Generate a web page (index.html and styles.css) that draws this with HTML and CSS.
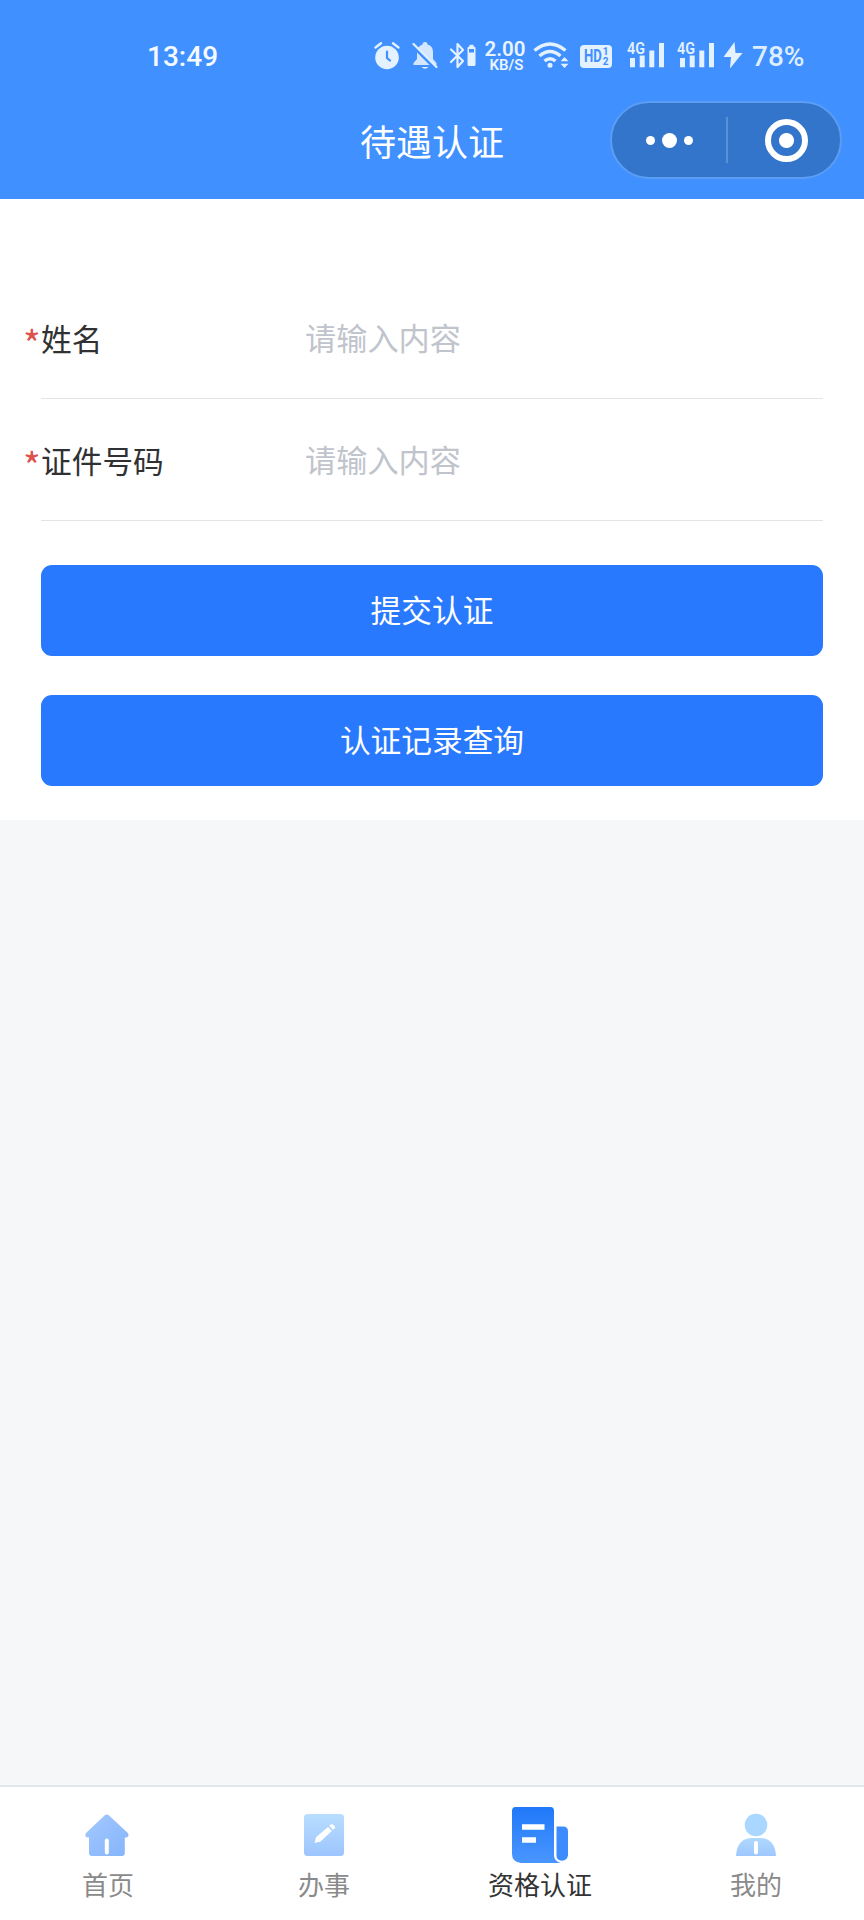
FILE: index.html
```
<!DOCTYPE html>
<html lang="zh-CN">
<head>
    <meta charset="UTF-8">
    <title>待遇认证</title>
    <link rel="stylesheet" href="styles.css">
</head>
<body>
<div class="page">
    <div class="header">
        <!--状态栏-->
        <div class="status">
            <span class="time">13:49</span>
            <div class="icons">
                <svg class="alarm" width="28" height="30" viewBox="0 0 28 30">
                    <circle cx="14" cy="16.5" r="11.8" fill="#e4f1ff"/>
                    <path d="M2.5 6.5L8 2.3M25.5 6.5L20 2.3" stroke="#e4f1ff" stroke-width="2.4" stroke-linecap="round"/>
                    <path d="M14 10.5v6.5l3 2.500" fill="none" stroke="#4090ff" stroke-width="2.2" stroke-linecap="round"/>
                </svg>
                <svg class="bell" width="26" height="30" viewBox="0 0 26 30">
                    <path d="M10.500 3.500a2.500 2.500 0 0 1 5 0a7.500 7.500 0 0 1 5.500 7.500v7l3.500 4v2h-23v-2l3.500-4v-7a8 8 0 0 1 5.500-7.500z" fill="#d4e7ff"/>
                    <path d="M9.500 26h7q-3.500 3.500-7 0z" fill="#e4f1ff"/>
                    <path d="M0 3.500L24.500 28" stroke="#4090ff" stroke-width="4"/>
                    <path d="M1.500 3L24.500 26" stroke="#e4f1ff" stroke-width="2.200" stroke-linecap="round"/>
                </svg>
                <svg class="bluetooth" width="28" height="30" viewBox="0 0 28 30">
                    <path d="M2 8.500L14 20L8.500 26V3L14 9L2 21" fill="none" stroke="#e4f1ff" stroke-width="2.200" stroke-linejoin="round" stroke-linecap="round"/>
                    <rect x="18.500" y="5.500" width="8" height="19.500" rx="1.500" fill="#e4f1ff"/>
                    <rect x="20.500" y="3.800" width="4" height="3" fill="#e4f1ff"/>
                    <rect x="20" y="8" width="5" height="3.500" fill="#4090ff"/>
                </svg>
                <div class="speed"><b>2.00</b><i>KB/S</i></div>
                <svg class="wifi" width="37" height="30" viewBox="0 0 37 30">
                    <g fill="none" stroke="#e4f1ff" stroke-width="3.500">
                        <path d="M1.500 9.500q15.500-13 31 0"/>
                        <path d="M6.500 15q10.500-9 21 0"/>
                        <path d="M11.500 20q5.500-4.500 11 0"/>
                    </g>
                    <circle cx="17" cy="24.300" r="2.500" fill="#e4f1ff"/>
                    <path d="M27.500 20.300l4-4.300l4 4.300zM27.500 22.700l4 4.300l4-4.300z" fill="#e4f1ff"/>
                </svg>
                <div class="hd">
                    <span>HD</span>
                    <div class="sim"><i>1</i><i>2</i></div>
                </div>
                <svg class="signal" width="38" height="30" viewBox="0 0 38 30">
                    <text x="0" y="12.500" class="net" textLength="18" lengthAdjust="spacingAndGlyphs">4G</text>
                    <path d="M5.500 17v9.300M15.200 14.500v11.800M24.800 9.500v16.800M34.500 2v24.300" stroke="#e4f1ff" stroke-width="5"/>
                </svg>
                <svg class="signal2" width="38" height="30" viewBox="0 0 38 30">
                    <text x="0" y="12.500" class="net" textLength="18" lengthAdjust="spacingAndGlyphs">4G</text>
                    <path d="M5.500 17v9.300M15.200 14.500v11.800M24.800 9.500v16.800M34.500 2v24.300" stroke="#e4f1ff" stroke-width="5"/>
                </svg>
                <svg class="bolt" width="20" height="30" viewBox="0 0 20 30">
                    <path d="M11.500 1L0.500 16h7.500L7 27.500L19.500 12h-7z" fill="#e4f1ff"/>
                </svg>
                <span class="power">78%</span>
            </div>
        </div>
        <!--标题栏-->
        <div class="nav">
            <h1 class="title">待遇认证</h1>
            <div class="capsule">
                <div class="more"><i></i><i class="big"></i><i></i></div>
                <div class="line"></div>
                <div class="close"><i></i></div>
            </div>
        </div>
    </div>

    <div class="form">
        <div class="item">
            <label class="label" for="name"><em>*</em>姓名</label>
            <input class="input" id="name" type="text" placeholder="请输入内容">
        </div>
        <div class="item">
            <label class="label" for="card"><em>*</em>证件号码</label>
            <input class="input" id="card" type="text" placeholder="请输入内容">
        </div>
        <button class="btn">提交认证</button>
        <button class="btn">认证记录查询</button>
    </div>

    <!--底部导航-->
    <div class="tabbar">
        <div class="tab">
            <svg width="60" height="60" viewBox="0 0 60 60">
                <defs><linearGradient id="g1" x1="0" y1="0" x2="1" y2="1"><stop offset="0" stop-color="#a3c9ff"/><stop offset="1" stop-color="#85b4fb"/></linearGradient></defs>
                <path d="M26.500 10.600q2.300-2 4.600 0L49.800 28q2 3.500-1.500 4.500h-1.500V48q0 3-3 3H14q-3 0-3-3V32.500H9.500q-3.500-1-1.500-4.500z" fill="url(#g1)"/>
                <path d="M28.800 35.500v12" stroke="#fff" stroke-width="4" stroke-linecap="round"/>
            </svg>
            <span>首页</span>
        </div>
        <div class="tab">
            <svg width="60" height="60" viewBox="0 0 60 60">
                <defs><linearGradient id="g2" x1="0" y1="0" x2="0" y2="1"><stop offset="0" stop-color="#b9ddff"/><stop offset="1" stop-color="#9dc5fe"/></linearGradient></defs>
                <rect x="10" y="9" width="40" height="42" rx="3.500" fill="url(#g2)"/>
                <path d="M34 22L37.800 26L26.500 36.500L20.500 38L22 32.300zM35.300 20.800l1.500-1.300q1.500-.8 2.800.5l1.200 1.300q.9 1.400-.2 2.300l-1.500 1.200z" fill="#fff"/>
            </svg>
            <span>办事</span>
        </div>
        <div class="tab active">
            <svg width="60" height="60" viewBox="0 0 60 60">
                <defs><linearGradient id="g3" x1="0" y1="0" x2="0" y2="1"><stop offset="0" stop-color="#2079f9"/><stop offset="1" stop-color="#4a96ff"/></linearGradient></defs>
                <path d="M5.500 2H40.500q3.500 0 3.500 4V50q0 6 6.500 8H11q-9-1-9-9V6q0-4 3.500-4z" fill="url(#g3)"/>
                <path d="M46.500 21.500h6.500q5 0 5 5v24q-1 5-6 5.300q-5.500-.3-5.500-5.300z" fill="#3d8cff"/>
                <path d="M12 22h22.500M12 35h14" stroke="#fff" stroke-width="5.500"/>
            </svg>
            <span>资格认证</span>
        </div>
        <div class="tab">
            <svg width="60" height="60" viewBox="0 0 60 60">
                <defs><linearGradient id="g4" x1="0" y1="0" x2="0" y2="1"><stop offset="0" stop-color="#aed9ff"/><stop offset="1" stop-color="#9fc7ff"/></linearGradient></defs>
                <circle cx="30" cy="20" r="11.300" fill="#aad7ff"/>
                <path d="M10 51q1-17 15-18h10q14 1 15 18z" fill="url(#g4)"/>
                <path d="M30 38v9.500" stroke="#fff" stroke-width="4" stroke-linecap="round"/>
            </svg>
            <span>我的</span>
        </div>
    </div>
</div>
</body>
</html>
```
FILE: styles.css
```
*{box-sizing: border-box;margin: 0;padding: 0;}
body{font-family: "Noto Sans CJK SC", sans-serif;background: #f5f7f9;}
i,em{font-style: normal;}
svg{display: block;flex: none;overflow: visible;}
.page{display: flex;flex-direction: column;width: 864px;height: 1920px;overflow: hidden;}

/*头部*/
.header{height: 199px;background: #4090ff;color: #fff;}
.status{display: flex;align-items: center;height: 100px;padding: 12px 0 0 147px;
    font-family: Roboto, sans-serif;color: #e9f4ff;}
.time{width: 226px;padding-top: 1px;font-size: 28px;font-weight: 500;line-height: 30px;color: #f4faff;}
.icons{display: flex;height: 30px;}
.bell{margin-left: 11px;}
.bluetooth{margin-left: 11px;}
.speed{display: flex;flex-direction: column;align-items: center;width: 42px;margin-left: 7px;}
.speed b{font-size: 20.500px;line-height: 16px;font-weight: 600;}
.speed i{padding: 1px 0 0 3px;font-size: 15px;line-height: 15px;font-weight: 600;}
.wifi{margin-left: 7px;}
.hd{display: flex;align-items: center;justify-content: center;width: 32px;height: 23px;margin: 4px 0 0 10px;
    border-radius: 4px;background: #e4f1ff;color: #4090ff;font-weight: 700;}
.hd span{width: 19px;font-size: 17.500px;line-height: 23px;transform: scaleX(.75);transform-origin: left;}
.sim{display: flex;flex-direction: column;}
.sim i{font-size: 10px;line-height: 10px;}
.net{font-size: 16px;font-weight: 600;fill: #e4f1ff;}
.signal{margin-left: 15px;}
.signal2{margin-left: 12px;}
.bolt{margin-left: 8px;}
.power{margin-left: 9px;font-size: 28px;font-weight: 500;line-height: 32px;color: #dfeeff;}

.nav{display: grid;grid-template-columns: 1fr auto 1fr;align-items: center;height: 80px;}
.title{grid-column: 2;font-size: 36px;font-weight: 400;line-height: 48px;}
.capsule{display: flex;align-items: center;justify-self: end;width: 232px;height: 78px;margin-right: 22px;
    border: 2px solid #5b9df3;border-radius: 39px;background: #3275cb;}
.more{width: 114px;display: flex;align-items: center;justify-content: center;gap: 7px;}
.more i{width: 9px;height: 9px;border-radius: 50%;background: #fff;}
.more .big{width: 15px;height: 15px;}
.line{width: 2px;height: 46px;background: #5c90d6;}
.close{flex: 1;display: flex;align-items: center;justify-content: center;padding-left: 5px;}
.close i{width: 43px;height: 43px;border: 6px solid #fff;border-radius: 50%;
    background: radial-gradient(circle, #fff 7px, transparent 8px);}

/*表单*/
.form{height: 621px;padding: 77px 41px 0;background: #fff;}
.item{display: flex;align-items: center;height: 122.500px;border-bottom: 1px solid #e4e4e4;}
.label{display: flex;width: 281px;height: 44px;margin-left: -17px;font-size: 30.700px;line-height: 45px;color: #303133;}
.label em{width: 17px;padding-top: 6px;font-size: 38px;line-height: 44px;text-indent: -1px;color: #dd524d;}
.input{width: 500px;border: 0;outline: 0;background: none;font-family: inherit;font-size: 31.200px;line-height: 44px;color: #303133;}
.input::placeholder{color: #c0c4cc;}
.btn{display: block;width: 100%;height: 91px;margin-top: 44px;padding-bottom: 4px;border: 0;border-radius: 11px;background: #2979ff;
    font-family: inherit;font-size: 30.700px;color: #fff;}
.btn + .btn{margin-top: 39px;}

.tabbar{display: flex;height: 135px;margin-top: auto;border-top: 2px solid #e3e6e9;background: #fff;}
.tab{flex: 1;display: flex;flex-direction: column;align-items: center;padding-top: 18px;
    font-size: 26px;line-height: 36px;color: #8a8a8a;}
.tab span{margin-top: 1px;}
.active{color: #333;}
```
